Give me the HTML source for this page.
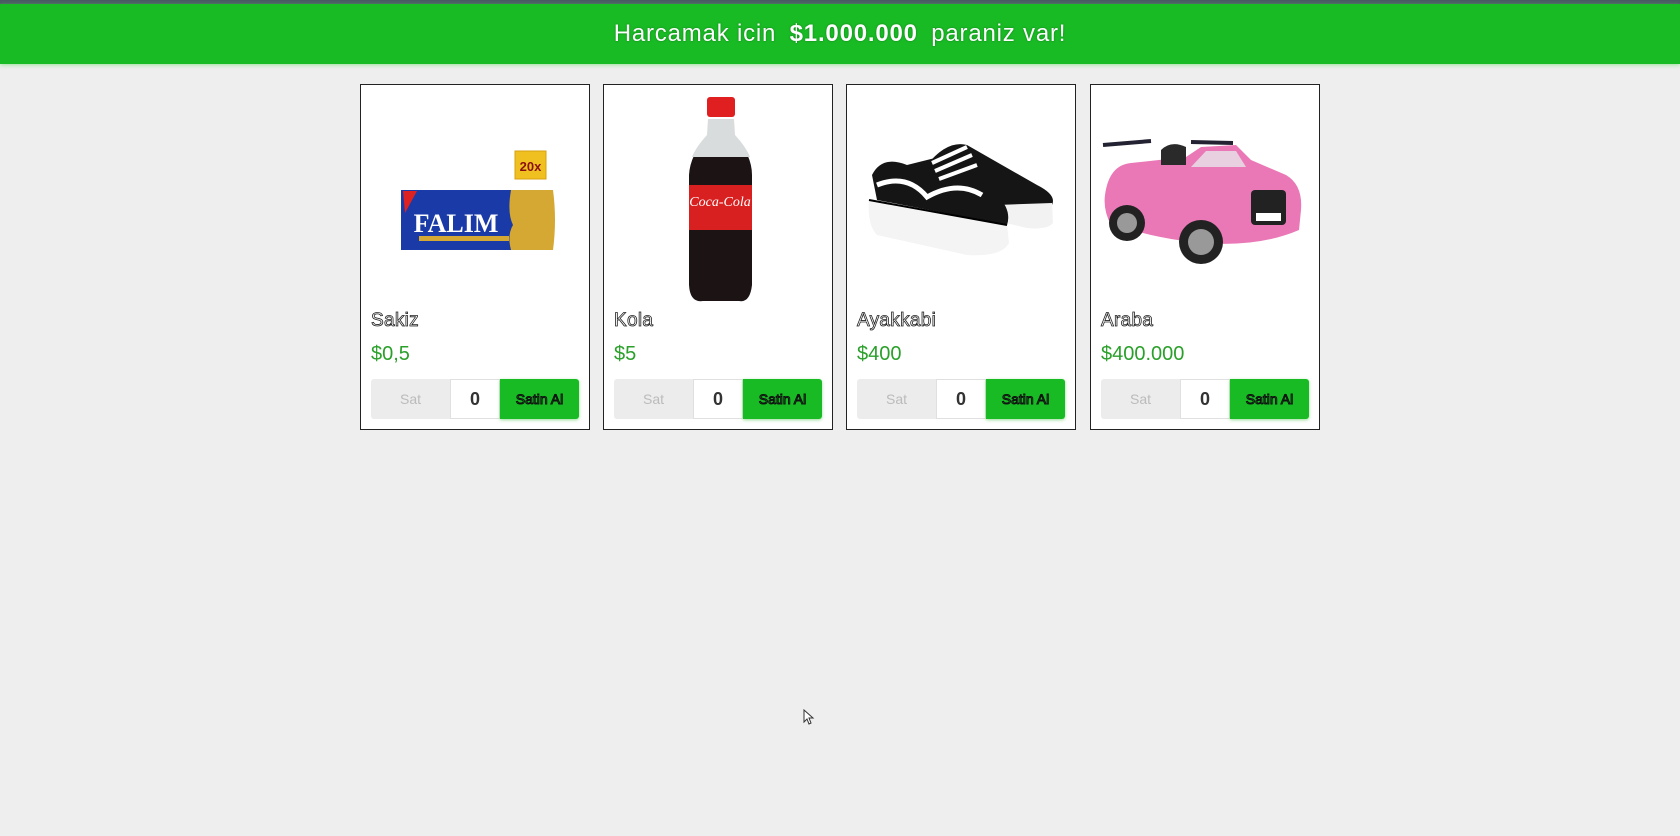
<!DOCTYPE html>
<html><head><meta charset="utf-8"><style>
*{margin:0;padding:0;box-sizing:border-box}
body{width:1680px;height:836px;background:#eeeeee;font-family:"Liberation Sans",sans-serif;position:relative;overflow:hidden}
.top{position:absolute;left:0;top:0;width:1680px;height:4px;background:#4a5a63}
.hdr{position:absolute;left:0;top:4px;width:1680px;height:60px;background:#19bb25;box-shadow:0 1px 4px rgba(100,220,100,.6);color:#fff;font-size:24px;text-align:center;line-height:60px;letter-spacing:.8px;text-shadow:0 0 2px rgba(0,0,0,.35)}
.hdr b{font-weight:bold;margin:0 6px}
.card{position:absolute;top:84px;width:230px;height:346px;background:#fff;border:1px solid #222}
.card svg{position:absolute;left:0;top:0}
.name{position:absolute;left:10px;top:225px;font-size:19px;color:#fff;-webkit-text-stroke:0.8px #222;letter-spacing:.3px}
.price{position:absolute;left:10px;top:258px;font-size:20px;color:#2aa02a}
.btns{position:absolute;left:10px;top:294px;height:40px;width:208px;display:flex}
.sat{width:79px;background:#ececec;color:#bbb;font-size:14px;text-align:center;line-height:40px;border-radius:3px 0 0 3px}
.inp{width:50px;background:#fff;border:1px solid #e0e0e0;font-size:18px;font-weight:bold;color:#333;text-align:center;line-height:38px}
.buy{width:79px;background:#19bb25;color:#19bb25;-webkit-text-stroke:1px #111;font-size:14px;text-align:center;line-height:40px;border-radius:0 3px 3px 0;box-shadow:0 1px 3px rgba(80,200,80,.6)}
</style></head><body>
<div class="top"></div>
<div class="hdr">Harcamak icin <b>$1.000.000</b> paraniz var!</div>

<div class="card" style="left:360px">
<svg width="230" height="346">
<rect x="154" y="66" width="31" height="28" fill="#f0c020" stroke="#d8a010"/>
<text x="169.5" y="86" font-size="13" font-weight="bold" fill="#8a1010" text-anchor="middle" font-family="Liberation Sans">20x</text>
<rect x="40" y="105" width="120" height="60" fill="#1a3aa8"/>
<path d="M150 105 L192 105 Q196 135 192 165 L150 165 Q146 150 152 140 Q146 128 150 105Z" fill="#d4a832"/>
<path d="M42 106 l14 0 l-12 22z" fill="#d22"/>
<text x="95" y="147" font-size="26" font-weight="bold" fill="#fff" text-anchor="middle" font-family="Liberation Serif">FALIM</text>
<rect x="58" y="151" width="90" height="5" fill="#d4a832"/>
</svg>
<div class="name">Sakiz</div><div class="price">$0,5</div>
<div class="btns"><div class="sat">Sat</div><div class="inp">0</div><div class="buy">Satin Al</div></div>
</div>

<div class="card" style="left:603px">
<svg width="230" height="346">
<rect x="103" y="12" width="28" height="20" rx="3" fill="#e02020"/>
<path d="M106 34 L128 34 L130 50 Q148 70 148 90 L148 200 Q146 218 135 216 L99 216 Q86 218 85 200 L85 90 Q86 70 104 50 Z" fill="#1c1414"/>
<path d="M104 34 L130 34 L131 50 Q142 62 146 72 L88 72 Q92 62 103 50Z" fill="#d8dcdc"/>
<rect x="85" y="100" width="63" height="45" fill="#d92020"/>
<text x="116" y="121" font-size="14" font-style="italic" fill="#fff" text-anchor="middle" font-family="Liberation Serif">Coca-Cola</text>
</svg>
<div class="name">Kola</div><div class="price">$5</div>
<div class="btns"><div class="sat">Sat</div><div class="inp">0</div><div class="buy">Satin Al</div></div>
</div>

<div class="card" style="left:846px">
<svg width="230" height="346">
<path d="M80 80 Q100 55 120 60 L190 100 Q210 110 205 120 L160 125 Z" fill="#151515"/>
<path d="M150 120 L205 118 L206 138 Q200 145 180 143 L150 136Z" fill="#f2f2f2"/>
<path d="M25 90 Q35 70 60 80 L100 70 L150 110 Q165 125 160 140 L30 115 Z" fill="#151515"/>
<path d="M22 115 L160 140 L162 158 Q155 172 120 170 L30 150 Q20 140 22 115Z" fill="#f4f4f4"/>
<path d="M22 115 L160 140" stroke="#000" stroke-width="2"/>
<path d="M30 100 Q60 88 80 112 Q110 95 135 110" stroke="#fff" stroke-width="5" fill="none"/>
<path d="M85 78 L120 62 M88 86 L125 70 M92 94 L130 80" stroke="#fff" stroke-width="4"/>
</svg>
<div class="name">Ayakkabi</div><div class="price">$400</div>
<div class="btns"><div class="sat">Sat</div><div class="inp">0</div><div class="buy">Satin Al</div></div>
</div>

<div class="card" style="left:1090px">
<svg width="230" height="346">
<path d="M12 60 L60 56 M100 57 L142 58" stroke="#223" stroke-width="4"/>
<path d="M14 110 Q18 80 40 78 L95 72 L110 62 L145 60 L160 75 L195 90 Q212 100 210 125 L208 145 Q150 170 60 150 L20 140 Q12 125 14 110Z" fill="#ea78b6"/>
<path d="M100 82 L115 66 L145 66 L155 82Z" fill="#e8d0e0"/>
<path d="M70 65 Q80 55 95 62 L95 80 L70 80Z" fill="#2a2a2a"/>
<rect x="160" y="105" width="35" height="35" rx="4" fill="#222"/>
<rect x="165" y="128" width="25" height="8" fill="#fff"/>
<circle cx="36" cy="138" r="18" fill="#222"/><circle cx="36" cy="138" r="10" fill="#999"/>
<circle cx="110" cy="157" r="22" fill="#222"/><circle cx="110" cy="157" r="13" fill="#999"/>
</svg>
<div class="name">Araba</div><div class="price">$400.000</div>
<div class="btns"><div class="sat">Sat</div><div class="inp">0</div><div class="buy">Satin Al</div></div>
</div>

<svg style="position:absolute;left:803px;top:709px" width="12" height="16"><path d="M1 1 L1 13 L4 10 L6 15 L8 14 L6 9 L10 9 Z" fill="#fff" stroke="#333" stroke-width="1"/></svg>
</body></html>
